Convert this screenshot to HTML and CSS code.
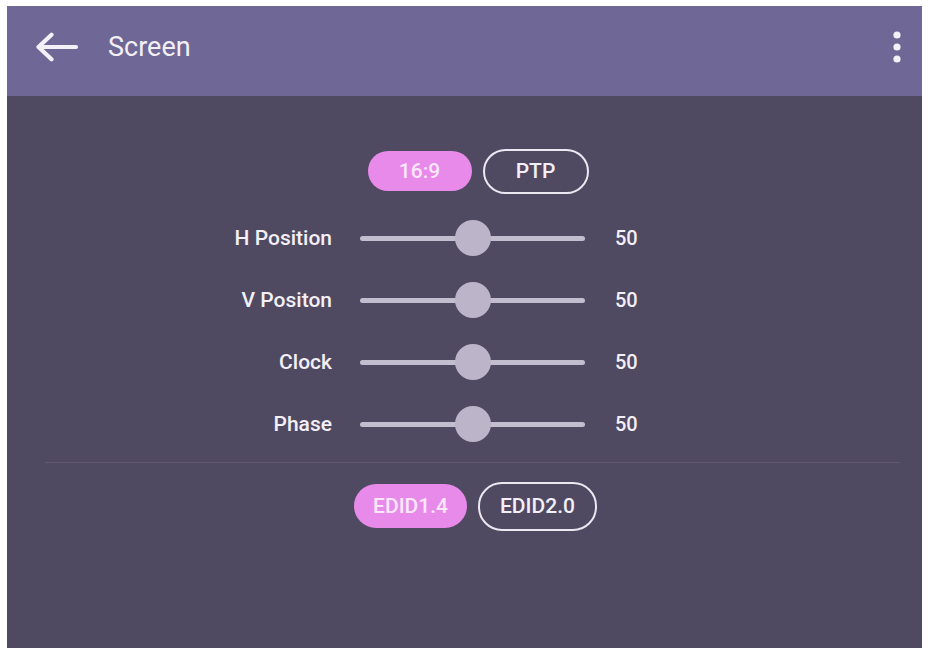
FILE: index.html
```html
<!DOCTYPE html>
<html lang="en">
<head>
<meta charset="utf-8">
<title>Screen</title>
<link rel="stylesheet" href="styles.css">
</head>
<body>
<div class="app">
  <header class="topbar">
    <svg class="back" width="44" height="30" viewBox="0 0 44 30" aria-hidden="true">
      <path d="M3.5 15H41M3.5 15L16.5 2.8M3.5 15L16.5 27.2" fill="none" stroke="#f4f0f8" stroke-width="4.2" stroke-linecap="round" stroke-linejoin="round"/>
    </svg>
    <h1 class="title">Screen</h1>
    <svg class="more" width="8" height="32" viewBox="0 0 8 32" aria-hidden="true">
      <circle cx="4" cy="4" r="3.6" fill="#f4f0f8"/>
      <circle cx="4" cy="16" r="3.6" fill="#f4f0f8"/>
      <circle cx="4" cy="28" r="3.6" fill="#f4f0f8"/>
    </svg>
  </header>
  <main class="content">
    <div class="controls">
      <div class="pill-row first">
        <span class="pill filled">16:9</span>
        <span class="pill outline">PTP</span>
      </div>
      <div class="sliders">
        <span class="label">H Position</span>
        <div class="slider"><span class="thumb" style="left: 50%"></span></div>
        <span class="value">50</span>

        <span class="label">V Positon</span>
        <div class="slider"><span class="thumb" style="left: 50%"></span></div>
        <span class="value">50</span>

        <span class="label">Clock</span>
        <div class="slider"><span class="thumb" style="left: 50%"></span></div>
        <span class="value">50</span>

        <span class="label">Phase</span>
        <div class="slider"><span class="thumb" style="left: 50%"></span></div>
        <span class="value">50</span>
      </div>
    </div>
    <div class="divider"></div>
    <div class="controls">
      <div class="pill-row second">
        <span class="pill filled big">EDID1.4</span>
        <span class="pill outline big">EDID2.0</span>
      </div>
    </div>
  </main>
</div>
</body>
</html>
```
FILE: styles.css
```css
html, body {
  background: #ffffff;
}
body {
  margin: 6px 7px 0 7px;
  font-family: Roboto, "Liberation Sans", sans-serif;
  color: #f3eff7;
}
.app {
  height: 642px;
  display: flex;
  flex-direction: column;
  background: #504962;
  overflow: hidden;
}
.topbar {
  height: 90px;
  box-sizing: border-box;
  padding: 0 21px 8px 28px;
  display: flex;
  align-items: center;
  background: #6f6795;
}
.back {
  display: block;
  flex: none;
}
.title {
  margin: 0 0 0 29px;
  font-size: 27px;
  font-weight: 400;
  color: #f3eff7;
  flex: 1;
}
.more {
  display: block;
  flex: none;
}
.content {
  flex: 1;
  display: flex;
  flex-direction: column;
}
.controls {
  padding-left: 22px;
  display: flex;
  flex-direction: column;
  align-items: center;
}
.pill-row {
  display: flex;
  align-items: center;
  gap: 11px;
}
.pill-row.first {
  margin-top: 52px;
  margin-left: 5px;
  height: 46px;
}
.pill-row.second {
  margin-top: 18px;
  height: 50px;
}
.pill {
  box-sizing: border-box;
  min-width: 104px;
  border-radius: 24px;
  display: flex;
  align-items: center;
  justify-content: center;
  font-size: 21px;
  font-weight: 500;
}
.pill.filled {
  height: 40px;
  padding: 0 16px;
  background: #e88ae9;
  color: #fbe6fb;
}
.pill.outline {
  height: 45px;
  min-width: 106px;
  padding: 0 18px;
  border: 2.5px solid #ece8f2;
  color: #f3eff7;
}
.pill.filled.big {
  height: 44px;
  padding: 0 19px;
}
.pill.outline.big {
  height: 49px;
  padding: 0 20px;
}
.sliders {
  margin-top: 13px;
  margin-right: 6px;
  display: grid;
  grid-template-columns: 150px 225px 150px;
  grid-auto-rows: 62px;
  column-gap: 28px;
  align-items: center;
}
.label {
  text-align: right;
  font-size: 21px;
  font-weight: 500;
  color: #f3eff7;
}
.value {
  padding-left: 2px;
  font-size: 20px;
  font-weight: 500;
  color: #f3eff7;
}
.slider {
  position: relative;
  height: 36px;
  display: flex;
  align-items: center;
}
.slider::before {
  content: "";
  display: block;
  width: 100%;
  height: 5px;
  border-radius: 3px;
  background: #c3bdd0;
}
.thumb {
  position: absolute;
  top: 0;
  width: 36px;
  height: 36px;
  margin-left: -18px;
  border-radius: 50%;
  background: #bcb5c9;
}
.divider {
  margin: 7px 22px 0 38px;
  height: 1px;
  background: #5f5870;
}
```
